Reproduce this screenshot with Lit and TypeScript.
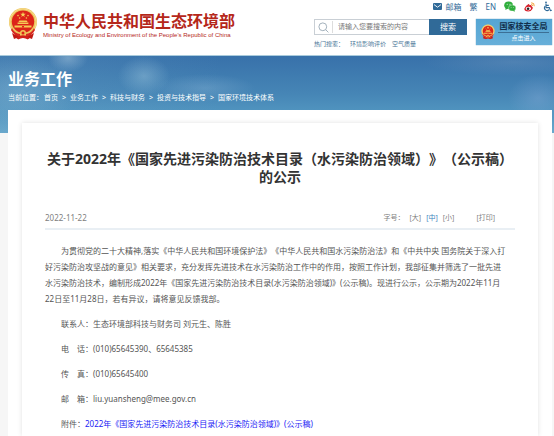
import { LitElement, html, css, svg } from "lit";
import { customElement, property } from "lit/decorators.js";

const emblem = svg`
  <path d="M5 23 L9 31 L15 29 L21 31 L25 23 Z" fill="#d0201a"/>
  <path d="M4 25 L6 31 L11 29 Z M26 25 L24 31 L19 29 Z" fill="#c01a14"/>
  <circle cx="15" cy="14" r="14" fill="#eec55c"/>
  <circle cx="15" cy="14" r="13.2" fill="none" stroke="#f6dc90" stroke-width="1"/>
  <circle cx="15" cy="13.6" r="11.2" fill="#dc2419"/>
  <path d="M15 3.8 L15.7 5.8 L17.8 5.8 L16.1 7 L16.7 9 L15 7.8 L13.3 9 L13.9 7 L12.2 5.8 L14.3 5.8 Z" fill="#f8d25a"/>
  <g fill="#f3c650"><circle cx="10" cy="7.6" r=".8"/><circle cx="11.6" cy="10" r=".8"/><circle cx="18.4" cy="10" r=".8"/><circle cx="20" cy="7.6" r=".8"/></g>
  <path d="M10.4 14 L11.4 12.4 H18.6 L19.6 14 Z M9.6 14.6 H20.4 V16 H9.6 Z M6.5 17.4 H23.5 V19.6 H6.5 Z" fill="#f5cb56"/>
  <path d="M14 18 H16 V19.6 H14 Z" fill="#dc2419"/>
  <path d="M4 20 Q6 25 12 26 L12 28 Q6 28 3 22 Z M26 20 Q24 25 18 26 L18 28 Q24 28 27 22 Z" fill="#d8281d"/>
  <circle cx="15" cy="25" r="3" fill="#f0c252"/>
  <circle cx="15" cy="25" r="1.5" fill="#dc2419"/>
  <path d="M9 29 Q15 25.6 21 29 L20 31.6 Q15 28.6 10 31.6 Z" fill="#d0201a"/>`;

@customElement("state-emblem")
export class StateEmblem extends LitElement {
  static styles = css`
    :host { display: block; flex: none; }
    svg { display: block; width: 100%; height: 100%; }
  `;
  render() {
    return html`<svg viewBox="0 0 30 32" aria-hidden="true">${emblem}</svg>`;
  }
}

@customElement("site-header")
export class SiteHeader extends LitElement {
  static styles = css`
    :host {
      display: flex;
      justify-content: space-between;
      height: 55px;
      background: #fff;
      color: #306a98;
      font-size: 8px;
      line-height: 12px;
    }
    a { color: inherit; text-decoration: none; }
    svg { display: block; }
    .brand { display: flex; gap: 5px; padding: 8px 0 0 8px; align-self: start; color: #b5271a; }
    .brand state-emblem { width: 30px; height: 32px; }
    .name { display: block; padding-top: 3px; font-size: 16px; line-height: 20px; font-weight: 700; white-space: nowrap; }
    .latin { display: block; font: 6px/8px "Liberation Sans", sans-serif; white-space: nowrap; }
    .tools { flex: none; width: 240px; padding-right: 2px; box-sizing: border-box; }
    .quick { display: flex; justify-content: flex-end; align-items: center; gap: 8px; height: 13px; }
    .mail { display: flex; align-items: center; gap: 3px; }
    .row { display: flex; justify-content: space-between; padding-top: 6px; }
    .search { display: flex; width: 153px; height: 16px; }
    .field {
      display: flex; flex: 1; align-items: center; min-width: 0;
      border: 1px solid #c9cfd5; border-right: 0; box-sizing: border-box;
    }
    .field label { display: flex; justify-content: center; width: 17px; height: 12px; align-items: center; border-right: 1px solid #ddd; }
    input {
      flex: 1; min-width: 0; border: 0; outline: 0; padding: 0 0 0 5px; background: none;
      font: inherit; font-size: 7px; color: #555; height: 12px;
    }
    input::placeholder { color: #777; opacity: 1; }
    .search button { width: 38px; flex: none; border: 0; padding: 0; background: #306a98; color: #fff; font: inherit; font-size: 8px; }
    .hot { display: flex; gap: 6px; padding-top: 3px; font-size: 6px; color: #4a7698; white-space: nowrap; }
    .bureau {
      display: flex; align-items: center; gap: 3px; width: 76px; height: 26px; padding: 0 3px 0 5px; box-sizing: border-box;
      background: linear-gradient(#55a5d3, #67afd9); color: #12304c; box-shadow: 0 0 1px #4a90bd;
    }
    .bureau state-emblem { width: 14px; height: 16px; }
    .plate { flex: 1; text-align: center; white-space: nowrap; }
    .plate strong { display: block; font-size: 8px; line-height: 10px; }
    .plate i { display: block; height: 1px; margin: 1px 0; background: #3c6f95; }
    .plate span { display: block; color: #fff; font-size: 6px; line-height: 9px; }
  `;

  render() {
    return html`
      <a class="brand" href="#">
        <state-emblem></state-emblem>
        <span>
          <span class="name">中华人民共和国生态环境部</span>
          <span class="latin">Ministry of Ecology and Environment of the People's Republic of China</span>
        </span>
      </a>
      <div class="tools">
        <nav class="quick">
          <a class="mail" href="#">
            <svg width="9" height="7" viewBox="0 0 9 7"><rect width="9" height="7" rx="1" fill="#306a98"/><path d="M1 1.6 L4.5 4.2 L8 1.6" fill="none" stroke="#fff" stroke-width=".9"/></svg>
            邮箱
          </a>
          <a href="#">繁</a>
          <a href="#">EN</a>
          <a href="#" aria-label="微信">
            <svg width="12" height="11" viewBox="0 0 12 11">
              <ellipse cx="4.6" cy="4.2" rx="4.4" ry="3.8" fill="#2fae3c"/><path d="M1.6 6.6 L1.4 9 L4 7.6 Z" fill="#2fae3c"/>
              <ellipse cx="8.2" cy="7" rx="3.7" ry="3.1" fill="#2fae3c" stroke="#fff" stroke-width=".4"/><path d="M10.4 9 L10.8 10.8 L8.6 9.8 Z" fill="#2fae3c"/>
              <g fill="#fff"><circle cx="3.2" cy="3.2" r=".5"/><circle cx="6" cy="3.2" r=".5"/><circle cx="7.1" cy="6.4" r=".4"/><circle cx="9.3" cy="6.4" r=".4"/></g>
            </svg>
          </a>
          <a href="#" aria-label="微博">
            <svg width="11" height="10" viewBox="0 0 11 10">
              <path d="M4.2 2.2 Q5.4 1.8 5.4 3.3 Q7.6 2.6 7.6 4.3 Q9.4 5 8.6 6.8 Q7.4 9.5 4.2 9.5 Q.4 9.3 .3 6.7 Q.6 4.3 4.2 2.2Z" fill="#d8202a"/>
              <ellipse cx="4.4" cy="6.6" rx="2.7" ry="1.8" fill="#fff"/><circle cx="4.1" cy="6.7" r="1.3" fill="#222"/>
              <path d="M7.2 .8 Q10.6 .6 10.2 4.2 M7.2 2.5 Q8.7 2.4 8.5 3.9" fill="none" stroke="#f09a28" stroke-width=".9"/>
            </svg>
          </a>
          <a href="#" aria-label="无障碍">
            <svg width="9" height="11" viewBox="0 0 9 11" fill="none" stroke="#306a98" stroke-width="1.1">
              <circle cx="3" cy="1.3" r=".9" fill="#306a98" stroke="none"/>
              <path d="M3 2.4 V6.6 H6.3 L7.4 9.6 L8.8 9.2 M3 4.4 H5.8"/><path d="M2.2 5.2 A2.5 2.5 0 1 0 6 8.6"/>
            </svg>
          </a>
        </nav>
        <div class="row">
          <div>
            <form class="search" @submit=${(e: Event) => e.preventDefault()}>
              <div class="field">
                <label for="q" aria-label="搜索">
                  <svg width="11" height="11" viewBox="0 0 11 11" fill="none" stroke="#9aa9b5" stroke-width=".9"><circle cx="4.8" cy="4.8" r="3.9"/><path d="M7.6 7.6 L10.4 10.4"/></svg>
                </label>
                <input id="q" type="text" placeholder="请输入您要搜索的内容" />
              </div>
              <button type="submit">搜索</button>
            </form>
            <div class="hot"><span>热门搜索：</span><a href="#">环境影响评价</a><a href="#">空气质量</a></div>
          </div>
          <a class="bureau" href="#">
            <state-emblem></state-emblem>
            <span class="plate"><strong>国家核安全局</strong><i></i><span>点击进入</span></span>
          </a>
        </div>
      </div>
    `;
  }
}

@customElement("section-banner")
export class SectionBanner extends LitElement {
  @property({ attribute: false }) trail: string[] = [];

  static styles = css`
    :host {
      display: block;
      height: 78px;
      padding: 13px 8px 0;
      box-sizing: border-box;
      color: #fff;
      border-top: 1px solid #a9cbdc;
      background:
        radial-gradient(ellipse 20px 14px at 68px 2px, rgba(190, 215, 230, 0.4), transparent),
        radial-gradient(ellipse 26px 20px at 144px 20px, rgba(165, 205, 225, 0.4), transparent),
        radial-gradient(ellipse 50px 14px at 205px 32px, rgba(150, 190, 220, 0.3), transparent),
        radial-gradient(ellipse 60px 34px at 20px 34px, rgba(150, 195, 220, 0.35), transparent),
        radial-gradient(ellipse 30px 24px at calc(100% - 16px) 42px, rgba(135, 170, 215, 0.4), transparent),
        radial-gradient(ellipse 90px 14px at calc(100% - 40px) 6px, rgba(110, 150, 190, 0.4), transparent),
        linear-gradient(90deg, rgba(110, 165, 200, 0.25), transparent 40%),
        linear-gradient(#3871aa, #4686b6 50%, #5296c0 75%, #68a9cd);
    }
    h2 { margin: 0; font-size: 16px; line-height: 20px; font-weight: 700; }
    nav { display: flex; gap: 4px; padding-top: 4px; font-size: 7px; line-height: 10px; white-space: nowrap; }
    .here { display: flex; gap: 1px; }
    a { color: inherit; text-decoration: none; }
  `;

  render() {
    const [first, ...rest] = this.trail;
    return html`
      <h2>业务工作</h2>
      <nav>
        <span class="here">当前位置：<a href="#">${first}</a></span>
        ${rest.map((t) => html`<span>&gt;</span><a href="#">${t}</a>`)}
      </nav>
    `;
  }
}

@customElement("notice-article")
export class NoticeArticle extends LitElement {
  static styles = css`
    :host {
      display: block;
      flex: 1;
      padding: 27px 23px 0;
      background: #fff;
      box-shadow: 0 0 5px rgba(0, 0, 0, 0.12);
      color: #555;
      font-size: 8px;
      line-height: 16px;
    }
    h1 { margin: 0; color: #333; font-size: 14px; line-height: 18px; font-weight: 700; text-align: center; white-space: nowrap; }
    .meta {
      display: flex; justify-content: space-between; align-items: center;
      margin-top: 24px; padding: 0 20px 2px 0; height: 16px;
      border-bottom: 2px solid #e9eff4; color: #808080;
    }
    .sizes { display: flex; align-items: center; gap: 5px; font-size: 7px; }
    button { border: 0; padding: 0; background: none; font: inherit; color: inherit; }
    .on { color: #3b84bd; }
    .print { margin-left: 17px; }
    .body { display: grid; gap: 9px; padding-top: 13px; }
    p { margin: 0; text-indent: 2em; white-space: nowrap; }
    p a { color: #1b1bf5; text-decoration: none; }
  `;

  render() {
    return html`
      <h1>关于2022年《国家先进污染防治技术目录（水污染防治领域）》（公示稿）<br />的公示</h1>
      <div class="meta">
        <time datetime="2022-11-22">2022-11-22</time>
        <div class="sizes">
          <span>字号：</span>
          <button>[大]</button><button class="on">[中]</button><button>[小]</button>
          <button class="print">[打印]</button>
        </div>
      </div>
      <div class="body">
        <p>
          为贯彻党的二十大精神,落实《中华人民共和国环境保护法》《中华人民共和国水污染防治法》和《中共中央 国务院关于深入打<br />好污染防治攻坚战的意见》相关要求，充分发挥先进技术在水污染防治工作中的作用，按照工作计划，我部征集并筛选了一批先进<br />水污染防治技术，编制形成2022年《国家先进污染防治技术目录(水污染防治领域)》(公示稿)。现进行公示，公示期为2022年11月<br />22日至11月28日，若有异议，请将意见反馈我部。
        </p>
        <p>联系人：生态环境部科技与财务司 刘元生、陈胜</p>
        <p>电　话：(010)65645390、65645385</p>
        <p>传　真：(010)65645400</p>
        <p>邮　箱：liu.yuansheng@mee.gov.cn</p>
        <p>附件：<a href="#">2022年《国家先进污染防治技术目录(水污染防治领域)》(公示稿)</a></p>
      </div>
    `;
  }
}

@customElement("app-root")
export class AppRoot extends LitElement {
  static styles = css`
    :host {
      display: flex;
      flex-direction: column;
      min-height: 100vh;
      background: #f6f6f6;
      font-family: "Noto Sans", "Noto Sans CJK SC", sans-serif;
      text-spacing-trim: space-all;
    }
    main {
      position: relative;
      display: flex;
      flex: 1;
      margin: -23px 2px 0 8px;
      padding: 13px 14px 0;
      background: #fff;
    }
  `;

  render() {
    return html`
      <site-header></site-header>
      <section-banner .trail=${["首页", "业务工作", "科技与财务", "投资与技术指导", "国家环境技术体系"]}></section-banner>
      <main><notice-article></notice-article></main>
    `;
  }
}
